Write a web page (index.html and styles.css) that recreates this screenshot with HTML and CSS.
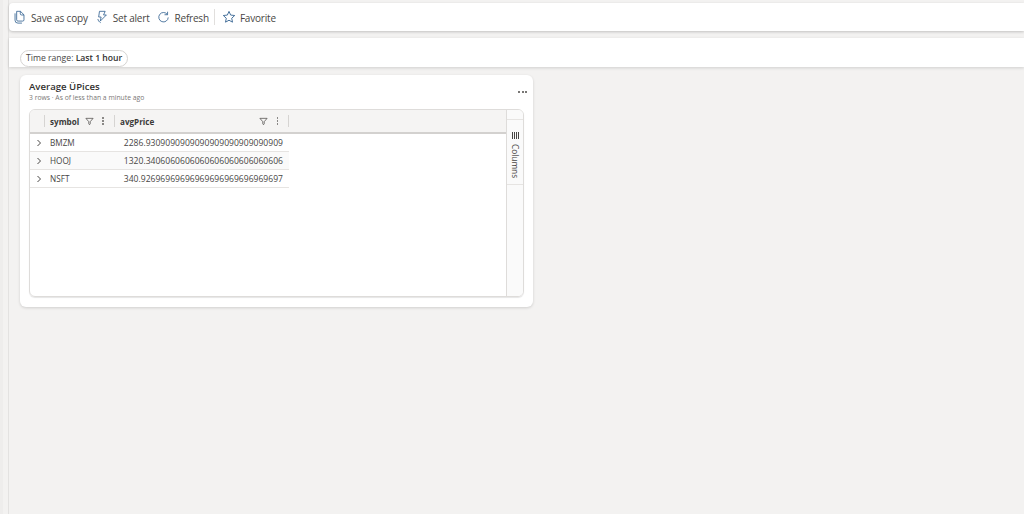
FILE: index.html
```html
<!DOCTYPE html>
<html lang="en">
<head>
<meta charset="utf-8">
<title>Average ÜPices</title>
<link rel="stylesheet" href="styles.css">
</head>
<body>
<div class="rail"></div>
<main class="page">
  <div class="toolbar">
    <button class="tool">
      <svg class="ico" viewBox="0 0 16 16"><path d="M4.500 1h4.700l4.300 4.300v6.200a1.500 1.500 0 0 1-1.500 1.500H6a1.500 1.500 0 0 1-1.500-1.500z M9 1v3a1.500 1.500 0 0 0 1.500 1.500h3 M2.500 3.500v8.500a3.500 3.500 0 0 0 3.500 3.500h5"/></svg>
      <span>Save as copy</span>
    </button>
    <button class="tool">
      <svg class="ico" viewBox="0 0 16 16"><path d="M5.500 1h7l-2 4.500h3.500l-7.500 7.500 1-5H4.500z M3.500 10.500c.5 2 1.500 3.500 3.500 4.500"/></svg>
      <span>Set alert</span>
    </button>
    <button class="tool">
      <svg class="ico" viewBox="0 0 16 16"><path d="M12.800 5A5.800 5.800 0 1 0 13.800 8.500 M13 1.500V5.200H9.300"/></svg>
      <span>Refresh</span>
    </button>
    <span class="sep"></span>
    <button class="tool">
      <svg class="ico star" viewBox="0 0 16 16"><path d="M8 1.600l1.900 4.200 4.600.5-3.400 3.100.9 4.500L8 11.700l-4 2.200.9-4.500L1.500 6.300l4.600-.5z"/></svg>
      <span>Favorite</span>
    </button>
  </div>

  <div class="filters">
    <span class="pill">Time range: <b>Last 1 hour</b></span>
  </div>

  <section class="card">
    <header class="card-head">
      <div>
        <h2>Average ÜPices</h2>
        <p>3 rows · As of less than a minute ago</p>
      </div>
      <span class="more"><i></i><i></i><i></i></span>
    </header>
    <div class="grid">
      <div class="grid-main">
        <div class="thead">
          <span class="c-exp"></span>
          <span class="c-sym th">
            <b>symbol</b>
            <svg class="fn" viewBox="0 0 10 10"><path d="M1 1.500h8L5.800 5.200v2.300L5 8.600 4.200 7.500V5.200z"/></svg>
            <span class="dots"><i></i><i></i><i></i></span>
          </span>
          <span class="c-val th">
            <b>avgPrice</b>
            <svg class="fn" viewBox="0 0 10 10"><path d="M1 1.500h8L5.800 5.200v2.300L5 8.600 4.200 7.500V5.200z"/></svg>
            <span class="dots"><i></i><i></i><i></i></span>
          </span>
        </div>
        <div class="row">
          <span class="c-exp"><svg class="chev" viewBox="0 0 8 8"><path d="M2.500 1l3 3-3 3"/></svg></span>
          <span class="c-sym">BMZM</span>
          <span class="c-val num">2286.9309090909090909090909090909</span>
        </div>
        <div class="row">
          <span class="c-exp"><svg class="chev" viewBox="0 0 8 8"><path d="M2.500 1l3 3-3 3"/></svg></span>
          <span class="c-sym">HOOJ</span>
          <span class="c-val num">1320.3406060606060606060606060606</span>
        </div>
        <div class="row">
          <span class="c-exp"><svg class="chev" viewBox="0 0 8 8"><path d="M2.500 1l3 3-3 3"/></svg></span>
          <span class="c-sym">NSFT</span>
          <span class="c-val num">340.92696969696969696969696969697</span>
        </div>
      </div>
      <aside class="side">
        <div class="side-tab">
          <svg class="cols" viewBox="0 0 8 7"><path d="M.5 0v7M2.500 0v7M4.500 0v7M6.500 0v7"/></svg>
          <span class="side-label">Columns</span>
        </div>
      </aside>
    </div>
  </section>
</main>
</body>
</html>
```

FILE: styles.css
```css
* { box-sizing: border-box; }
html, body { height: 100%; }
body {
  margin: 0;
  display: flex;
  overflow: hidden;
  background: #f3f2f1;
  color: #323130;
  font-family: "Open Sans", "Noto Sans", sans-serif;
}
.rail {
  flex: 0 0 9px;
  background: linear-gradient(to right, #eeedec 0, #eeedec 3px, #f3f2f1 3px, #f3f2f1 8px, #e3e2e1 8px);
}
.page { flex: 1; min-width: 0; padding-top: 3px; }

.toolbar {
  height: 28px;
  display: flex;
  align-items: center;
  padding-left: 4px;
  background: #fff;
  border-radius: 4px 0 0 4px;
  box-shadow: 0 1px 3px rgba(0,0,0,.2);
}
.tool {
  display: flex;
  align-items: center;
  gap: 5px;
  margin-right: 7px;
  padding: 0;
  border: 0;
  background: none;
  color: #484644;
  font: 400 10px "Open Sans", sans-serif;
  letter-spacing: -.2px;
}
.tool span { padding-top: 1px; }
.ico { width: 13px; height: 14px; fill: none; stroke: #2f5f8f; stroke-width: 1; }
.star { width: 14px; }
.tool:last-child { gap: 4px; }
.sep { width: 1px; height: 16px; margin: 0 7px 0 -2px; background: #e1dfdd; }

.filters {
  height: 29px;
  margin-top: 7px;
  padding: 6px 0 0 11px;
  background: #fff;
  box-shadow: 0 1px 3px rgba(0,0,0,.15);
}
.pill {
  display: inline-block;
  height: 17px;
  padding: 0 5px;
  border: 1px solid #d6d4d2;
  border-radius: 9px;
  font-size: 8.65px;
  line-height: 15px;
  color: #484644;
}
.pill b { font-weight: 600; color: #323130; }

.card {
  width: 513px;
  height: 232px;
  margin: 8px 0 0 11px;
  padding: 0 9px;
  background: #fff;
  border-radius: 6px;
  box-shadow: 0 1px 3px rgba(0,0,0,.15);
}
.card-head {
  height: 34px;
  padding-top: 5px;
  display: flex;
  justify-content: space-between;
}
.card-head h2 {
  margin: 0;
  font-size: 9.6px;
  line-height: 13px;
  font-weight: 600;
  color: #323130;
}
.card-head p {
  margin: 0;
  font-size: 6.8px;
  line-height: 10px;
  color: #7a7876;
}
.more { display: flex; gap: 1.5px; margin: 11px -3px 0 0; height: 2px; }
.more i { width: 2px; height: 2px; background: #797775; }

.grid {
  height: 188px;
  display: flex;
  border: 1px solid #dedcda;
  border-radius: 6px;
  box-shadow: 0 1px 1px rgba(0,0,0,.1);
  overflow: hidden;
}
.grid-main { flex: 1; min-width: 0; }
.thead {
  height: 24px;
  display: flex;
  align-items: center;
  background: #f5f4f3;
  border-bottom: 2px solid #d3d1cf;
}
.row {
  width: 259px;
  height: 18px;
  display: flex;
  align-items: center;
  border-bottom: 1px solid #e6e4e2;
  font-size: 8.58px;
  color: #484644;
}
.row:nth-child(3) { background: #fafafa; }
.c-exp { flex: 0 0 14px; display: flex; justify-content: center; padding-left: 4px; }
.c-sym { flex: 0 0 70px; padding-left: 6px; font-size: 8.2px; }
.c-val { flex: 0 0 175px; }
.num { padding-right: 6px; text-align: right; white-space: nowrap; }
.th {
  height: 12px;
  display: flex;
  align-items: center;
  border-left: 1px solid #d6d4d2;
  font-size: 8.1px;
}
.th b { font-weight: 700; color: #3b3a39; }
.c-sym.th { padding-left: 5px; }
.c-val.th { border-right: 1px solid #d6d4d2; padding-left: 5px; }
.c-sym.th .fn { margin-left: 6px; }
.c-sym.th .dots { margin-left: 8px; }
.c-val.th .fn { margin-left: auto; }
.c-val.th .dots { margin: 0 10px 0 9px; }
.fn { width: 9px; height: 9px; fill: none; stroke: #484644; stroke-width: .8; }
.dots { display: flex; flex-direction: column; gap: 1.5px; }
.dots i { width: 1.5px; height: 1.5px; background: #8a8886; }
.chev { width: 8px; height: 8px; fill: none; stroke: #484644; stroke-width: 1; }

.side {
  flex: 0 0 17px;
  padding-top: 9px;
  background: #fafafa;
  border-left: 1px solid #dedcda;
}
.side-tab {
  height: 66px;
  display: flex;
  flex-direction: column;
  align-items: center;
  padding-top: 12px;
  border-top: 1px solid #e6e4e2;
  border-bottom: 1px solid #e6e4e2;
  background: #fafafa;
}
.cols { flex: none; width: 8px; height: 7px; margin-left: 1px; fill: none; stroke: #484644; stroke-width: 1; }
.side-label {
  margin-top: 5px;
  writing-mode: vertical-rl;
  font-size: 8.3px;
  line-height: 12px;
  color: #484644;
}
```
